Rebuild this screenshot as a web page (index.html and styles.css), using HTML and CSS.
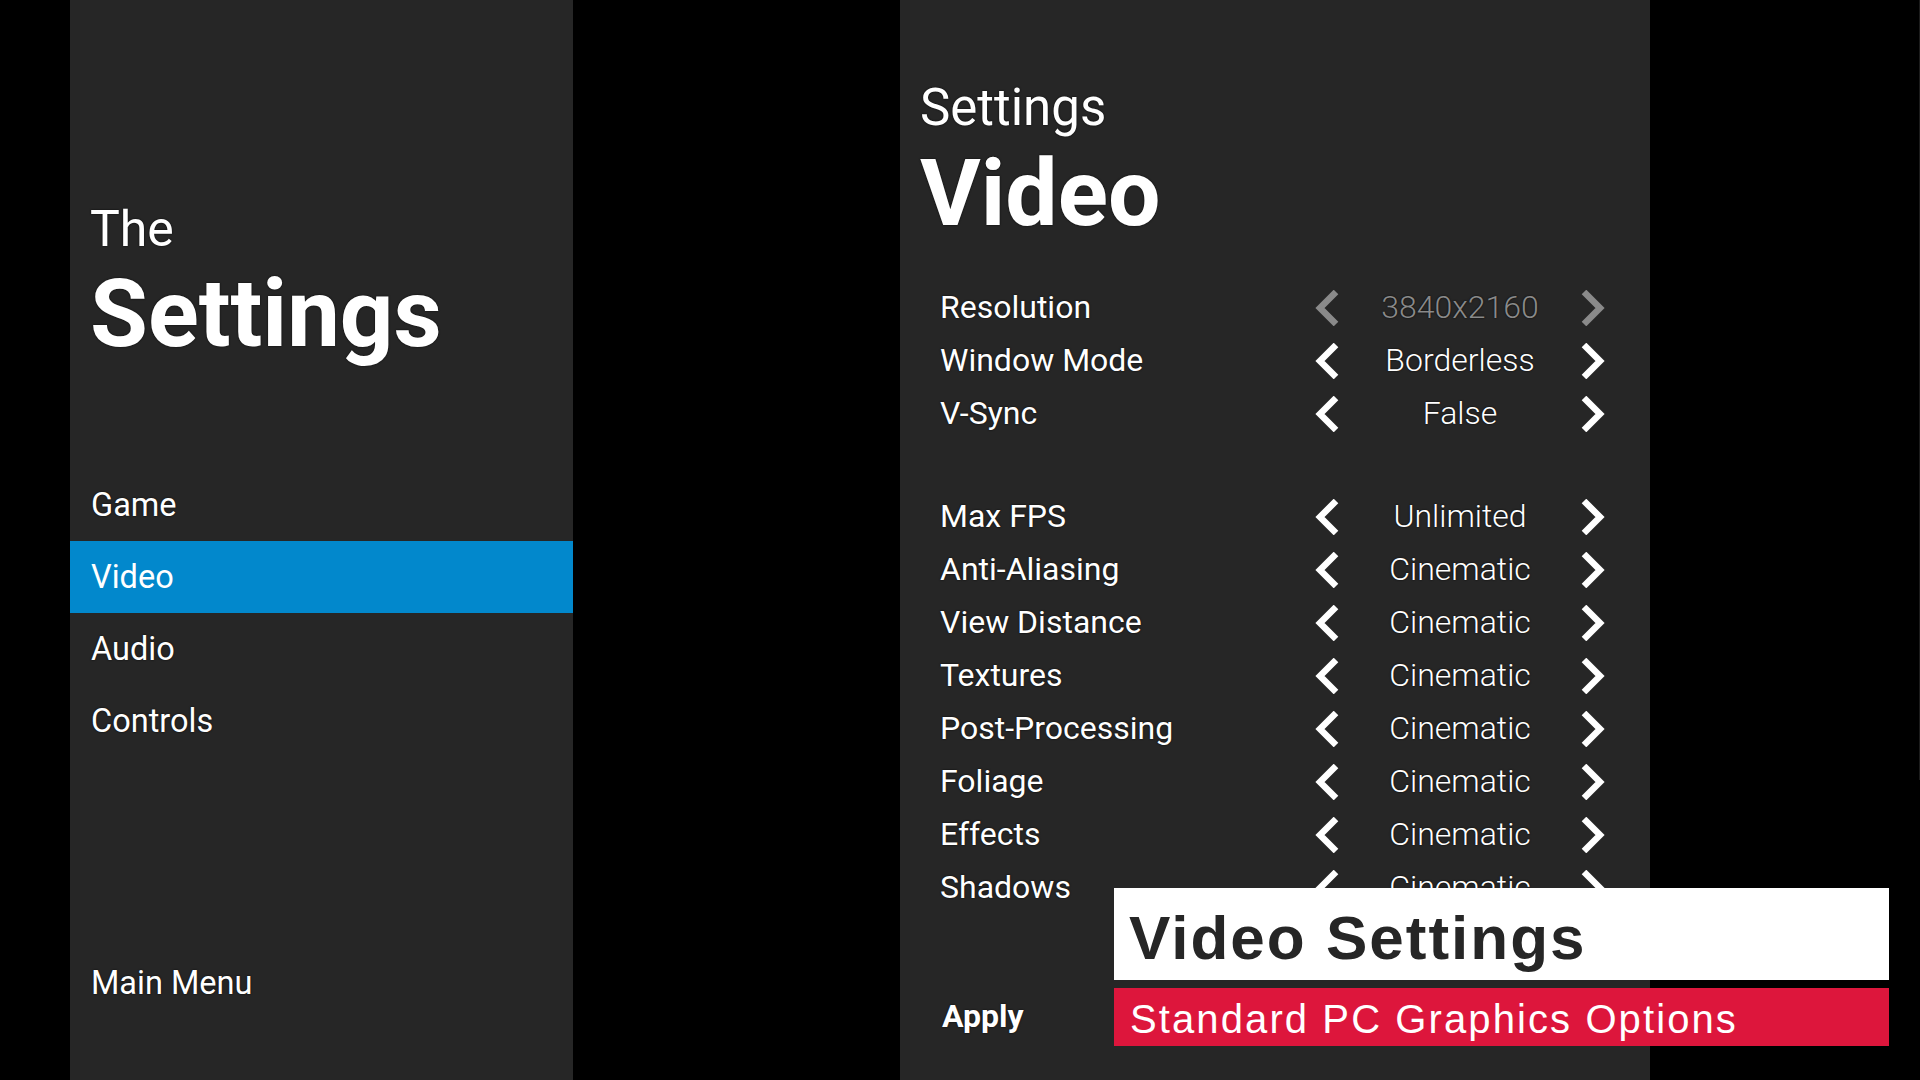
FILE: index.html
```html
<!DOCTYPE html>
<html lang="en">
<head>
    <meta charset="utf-8">
    <title>The Settings - Video</title>
    <link rel="stylesheet" href="styles.css">
</head>
<body>
    <div id="sidebar">
        <div class="brand">
            <div class="brand-small">The</div>
            <div class="brand-big">Settings</div>
        </div>
        <div class="nav">
            <a class="nav-link" href="#">Game</a>
            <a class="nav-link active" href="#">Video</a>
            <a class="nav-link" href="#">Audio</a>
            <a class="nav-link" href="#">Controls</a>
        </div>
        <a class="nav-link main-menu" href="#">Main Menu</a>
    </div>

    <div id="panel">
        <div class="panel-head">
            <div class="head-small">Settings</div>
            <div class="head-big">Video</div>
        </div>

        <div class="rows">
            <div class="row disabled">
                <span class="label">Resolution</span>
                <div class="selector">
                    <svg class="arrow" viewBox="0 0 24 36"><polyline points="21,2 5,18 21,34"/></svg>
                    <span class="value">3840x2160</span>
                    <svg class="arrow" viewBox="0 0 24 36"><polyline points="3,2 19,18 3,34"/></svg>
                </div>
            </div>
            <div class="row">
                <span class="label">Window Mode</span>
                <div class="selector">
                    <svg class="arrow" viewBox="0 0 24 36"><polyline points="21,2 5,18 21,34"/></svg>
                    <span class="value">Borderless</span>
                    <svg class="arrow" viewBox="0 0 24 36"><polyline points="3,2 19,18 3,34"/></svg>
                </div>
            </div>
            <div class="row">
                <span class="label">V-Sync</span>
                <div class="selector">
                    <svg class="arrow" viewBox="0 0 24 36"><polyline points="21,2 5,18 21,34"/></svg>
                    <span class="value">False</span>
                    <svg class="arrow" viewBox="0 0 24 36"><polyline points="3,2 19,18 3,34"/></svg>
                </div>
            </div>

            <div class="spacer"></div>

            <div class="row">
                <span class="label">Max FPS</span>
                <div class="selector">
                    <svg class="arrow" viewBox="0 0 24 36"><polyline points="21,2 5,18 21,34"/></svg>
                    <span class="value">Unlimited</span>
                    <svg class="arrow" viewBox="0 0 24 36"><polyline points="3,2 19,18 3,34"/></svg>
                </div>
            </div>
            <div class="row">
                <span class="label">Anti-Aliasing</span>
                <div class="selector">
                    <svg class="arrow" viewBox="0 0 24 36"><polyline points="21,2 5,18 21,34"/></svg>
                    <span class="value">Cinematic</span>
                    <svg class="arrow" viewBox="0 0 24 36"><polyline points="3,2 19,18 3,34"/></svg>
                </div>
            </div>
            <div class="row">
                <span class="label">View Distance</span>
                <div class="selector">
                    <svg class="arrow" viewBox="0 0 24 36"><polyline points="21,2 5,18 21,34"/></svg>
                    <span class="value">Cinematic</span>
                    <svg class="arrow" viewBox="0 0 24 36"><polyline points="3,2 19,18 3,34"/></svg>
                </div>
            </div>
            <div class="row">
                <span class="label">Textures</span>
                <div class="selector">
                    <svg class="arrow" viewBox="0 0 24 36"><polyline points="21,2 5,18 21,34"/></svg>
                    <span class="value">Cinematic</span>
                    <svg class="arrow" viewBox="0 0 24 36"><polyline points="3,2 19,18 3,34"/></svg>
                </div>
            </div>
            <div class="row">
                <span class="label">Post-Processing</span>
                <div class="selector">
                    <svg class="arrow" viewBox="0 0 24 36"><polyline points="21,2 5,18 21,34"/></svg>
                    <span class="value">Cinematic</span>
                    <svg class="arrow" viewBox="0 0 24 36"><polyline points="3,2 19,18 3,34"/></svg>
                </div>
            </div>
            <div class="row">
                <span class="label">Foliage</span>
                <div class="selector">
                    <svg class="arrow" viewBox="0 0 24 36"><polyline points="21,2 5,18 21,34"/></svg>
                    <span class="value">Cinematic</span>
                    <svg class="arrow" viewBox="0 0 24 36"><polyline points="3,2 19,18 3,34"/></svg>
                </div>
            </div>
            <div class="row">
                <span class="label">Effects</span>
                <div class="selector">
                    <svg class="arrow" viewBox="0 0 24 36"><polyline points="21,2 5,18 21,34"/></svg>
                    <span class="value">Cinematic</span>
                    <svg class="arrow" viewBox="0 0 24 36"><polyline points="3,2 19,18 3,34"/></svg>
                </div>
            </div>
            <div class="row">
                <span class="label">Shadows</span>
                <div class="selector">
                    <svg class="arrow" viewBox="0 0 24 36"><polyline points="21,2 5,18 21,34"/></svg>
                    <span class="value">Cinematic</span>
                    <svg class="arrow" viewBox="0 0 24 36"><polyline points="3,2 19,18 3,34"/></svg>
                </div>
            </div>
        </div>

        <a class="apply" href="#">Apply</a>
    </div>

    <div class="edge"></div>

    <div class="caption">
        <div class="caption-title">Video Settings</div>
        <div class="caption-sub">Standard PC Graphics Options</div>
    </div>
</body>
</html>
```

FILE: styles.css
```css
body {
    font-family: Roboto, "Noto Sans", sans-serif;
    margin: 0;
    padding: 0;
    width: 1920px;
    height: 1080px;
    background-color: #000;
    color: #fff;
    display: flex;
    overflow: hidden;
    position: relative;
}

a {
    color: #fff;
    text-decoration: none;
}

/* left menu */
#sidebar {
    width: 503px;
    height: 1080px;
    margin-left: 70px;
    background-color: #262626;
    display: flex;
    flex-direction: column;
}

.brand {
    padding: 199px 0 0 20px;
    text-shadow: 0 0 2px rgba(0, 0, 0, 0.9);
}

.brand-small {
    font-size: 50px;
    line-height: 60px;
}

.brand-big {
    font-size: 94px;
    font-weight: 700;
    line-height: 100px;
    margin-top: 5px;
}

.nav {
    margin-top: 105px;
}

.nav-link {
    display: block;
    height: 72px;
    line-height: 72px;
    padding-left: 21px;
    font-size: 32.5px;
    text-shadow: 0 0 2px rgba(0, 0, 0, 0.9);
}

.nav-link.active {
    background-color: #0288cc;
    text-shadow: none;
}

.main-menu {
    margin-top: auto;
    margin-bottom: 61px;
}

/* right settings panel */
#panel {
    width: 750px;
    height: 1080px;
    margin-left: 327px;
    background-color: #262626;
}

.panel-head {
    padding: 83px 0 0 20px;
    text-shadow: 0 0 2px rgba(0, 0, 0, 0.9);
}

.head-small {
    font-size: 51px;
    line-height: 50px;
}

.head-big {
    font-size: 93px;
    font-weight: 700;
    line-height: 100px;
    margin-top: 11px;
}

.rows {
    margin-top: 37px;
    padding: 0 45px 0 40px;
}

.row {
    display: flex;
    align-items: center;
    height: 53px;
    font-size: 32px;
    line-height: 53px;
}

.label {
    flex: 1;
    text-shadow: 0 0 2px rgba(0, 0, 0, 0.9);
}

.spacer {
    height: 50px;
}

.selector {
    width: 290px;
    display: grid;
    grid-template-columns: 30px 1fr 30px;
    align-items: center;
}

.value {
    text-align: center;
    font-weight: 300;
    text-shadow: 0 0 2px rgba(0, 0, 0, 0.9);
}

.arrow {
    width: 24px;
    height: 36px;
    display: block;
}

.selector .arrow:last-child {
    justify-self: end;
}

.arrow polyline {
    fill: none;
    stroke: #fff;
    stroke-width: 6.5;
    stroke-linejoin: miter;
}

.row.disabled .value {
    color: #8a8a8a;
}

.row.disabled .arrow polyline {
    stroke: #8a8a8a;
}

.apply {
    display: inline-block;
    margin: 76px 0 0 42px;
    font-size: 32px;
    font-weight: 700;
    line-height: 53px;
    text-shadow: 0 0 2px rgba(0, 0, 0, 0.9);
}

.edge {
    width: 1px;
    height: 780px;
    margin-left: auto;
    background-color: #1c1c1c;
}

/* caption overlay */
.caption {
    position: absolute;
    left: 1114px;
    top: 888px;
    width: 775px;
    font-family: "Liberation Sans", Arial, sans-serif;
}

.caption-title {
    height: 92px;
    line-height: 99px;
    padding-left: 15px;
    background-color: #fff;
    color: #262626;
    font-size: 62px;
    font-weight: 700;
    letter-spacing: 2px;
    overflow: hidden;
}

.caption-sub {
    height: 58px;
    line-height: 62px;
    margin-top: 8px;
    padding-left: 16px;
    background-color: #dd163c;
    color: #fff;
    font-size: 40px;
    letter-spacing: 2.1px;
    overflow: hidden;
}
```
